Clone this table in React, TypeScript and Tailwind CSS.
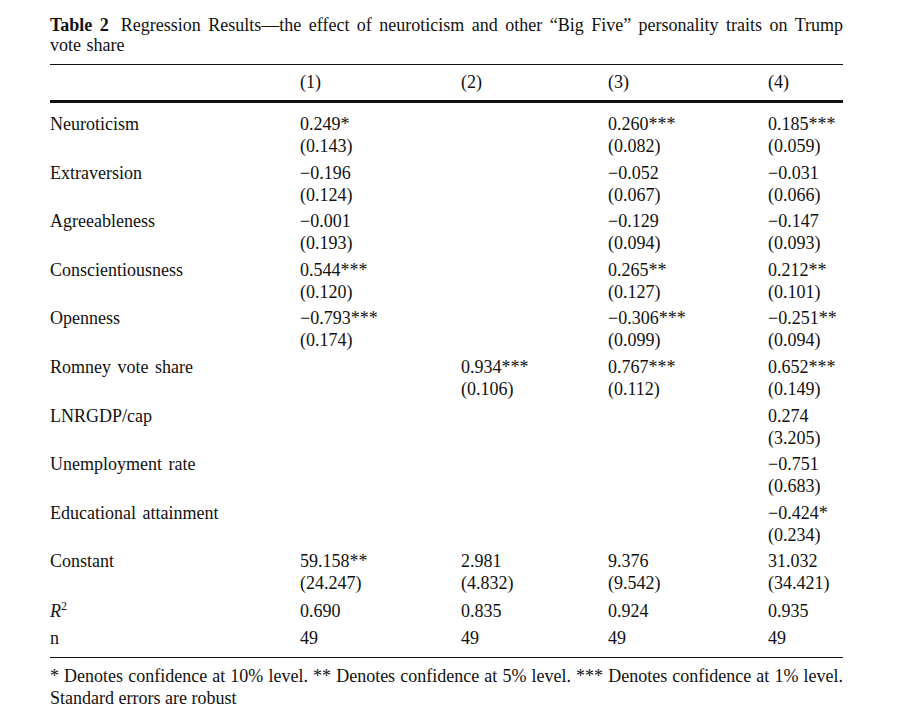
const rows: { label: string; cells: [string, string][] }[] = [
  { label: "Neuroticism", cells: [["0.249*", "(0.143)"], ["", ""], ["0.260***", "(0.082)"], ["0.185***", "(0.059)"]] },
  { label: "Extraversion", cells: [["−0.196", "(0.124)"], ["", ""], ["−0.052", "(0.067)"], ["−0.031", "(0.066)"]] },
  { label: "Agreeableness", cells: [["−0.001", "(0.193)"], ["", ""], ["−0.129", "(0.094)"], ["−0.147", "(0.093)"]] },
  { label: "Conscientiousness", cells: [["0.544***", "(0.120)"], ["", ""], ["0.265**", "(0.127)"], ["0.212**", "(0.101)"]] },
  { label: "Openness", cells: [["−0.793***", "(0.174)"], ["", ""], ["−0.306***", "(0.099)"], ["−0.251**", "(0.094)"]] },
  { label: "Romney vote share", cells: [["", ""], ["0.934***", "(0.106)"], ["0.767***", "(0.112)"], ["0.652***", "(0.149)"]] },
  { label: "LNRGDP/cap", cells: [["", ""], ["", ""], ["", ""], ["0.274", "(3.205)"]] },
  { label: "Unemployment rate", cells: [["", ""], ["", ""], ["", ""], ["−0.751", "(0.683)"]] },
  { label: "Educational attainment", cells: [["", ""], ["", ""], ["", ""], ["−0.424*", "(0.234)"]] },
  { label: "Constant", cells: [["59.158**", "(24.247)"], ["2.981", "(4.832)"], ["9.376", "(9.542)"], ["31.032", "(34.421)"]] },
];

const grid = "grid grid-cols-[250px_161px_147px_160px_74px]";

export default function App() {
  return (
    <div className="min-h-[714px] w-[902px] bg-white text-[#111] font-['Liberation_Serif','Times_New_Roman',serif] text-[18px]">
      <div className="ml-[50px] w-[793px] pt-[15px]">
        {/* Caption */}
        <p className="leading-[20px] text-justify [word-spacing:1px]">
          <span className="font-bold">Table 2</span>
          <span className="pl-[12px]">
            Regression Results—the effect of neuroticism and other “Big Five” personality traits on Trump vote share
          </span>
        </p>

        {/* Header */}
        <div className="mt-[9px] border-t border-[#111]" />
        <div className={`${grid} leading-[22px] pt-[6px] pb-[7px]`}>
          <div />
          <div>(1)</div>
          <div>(2)</div>
          <div>(3)</div>
          <div>(4)</div>
        </div>
        <div className="border-t-[3px] border-[#111]" />

        {/* Body */}
        <div className="pt-[10px]">
          {rows.map((r) => (
            <div key={r.label} className={`${grid} leading-[22px] h-[48.6px] [word-spacing:2px]`}>
              <div>{r.label}</div>
              {r.cells.map(([c, se], i) => (
                <div key={i}>
                  <div>{c || "\u00a0"}</div>
                  <div>{se || "\u00a0"}</div>
                </div>
              ))}
            </div>
          ))}
          <div className={`${grid} leading-[22px] h-[27px] mt-[1px]`}>
            <div>
              <span className="italic">R</span>
              <span className="relative -top-[7px] text-[12px]">2</span>
            </div>
            <div>0.690</div>
            <div>0.835</div>
            <div>0.924</div>
            <div>0.935</div>
          </div>
          <div className={`${grid} leading-[22px] h-[30px]`}>
            <div>n</div>
            <div>49</div>
            <div>49</div>
            <div>49</div>
            <div>49</div>
          </div>
        </div>

        {/* Footnote */}
        <div className="border-t border-[#111]" />
        <p className="pt-[7px] leading-[22px] text-justify">
          * Denotes confidence at 10% level. ** Denotes confidence at 5% level. *** Denotes confidence at 1% level. Standard errors are robust
        </p>
      </div>
    </div>
  );
}
